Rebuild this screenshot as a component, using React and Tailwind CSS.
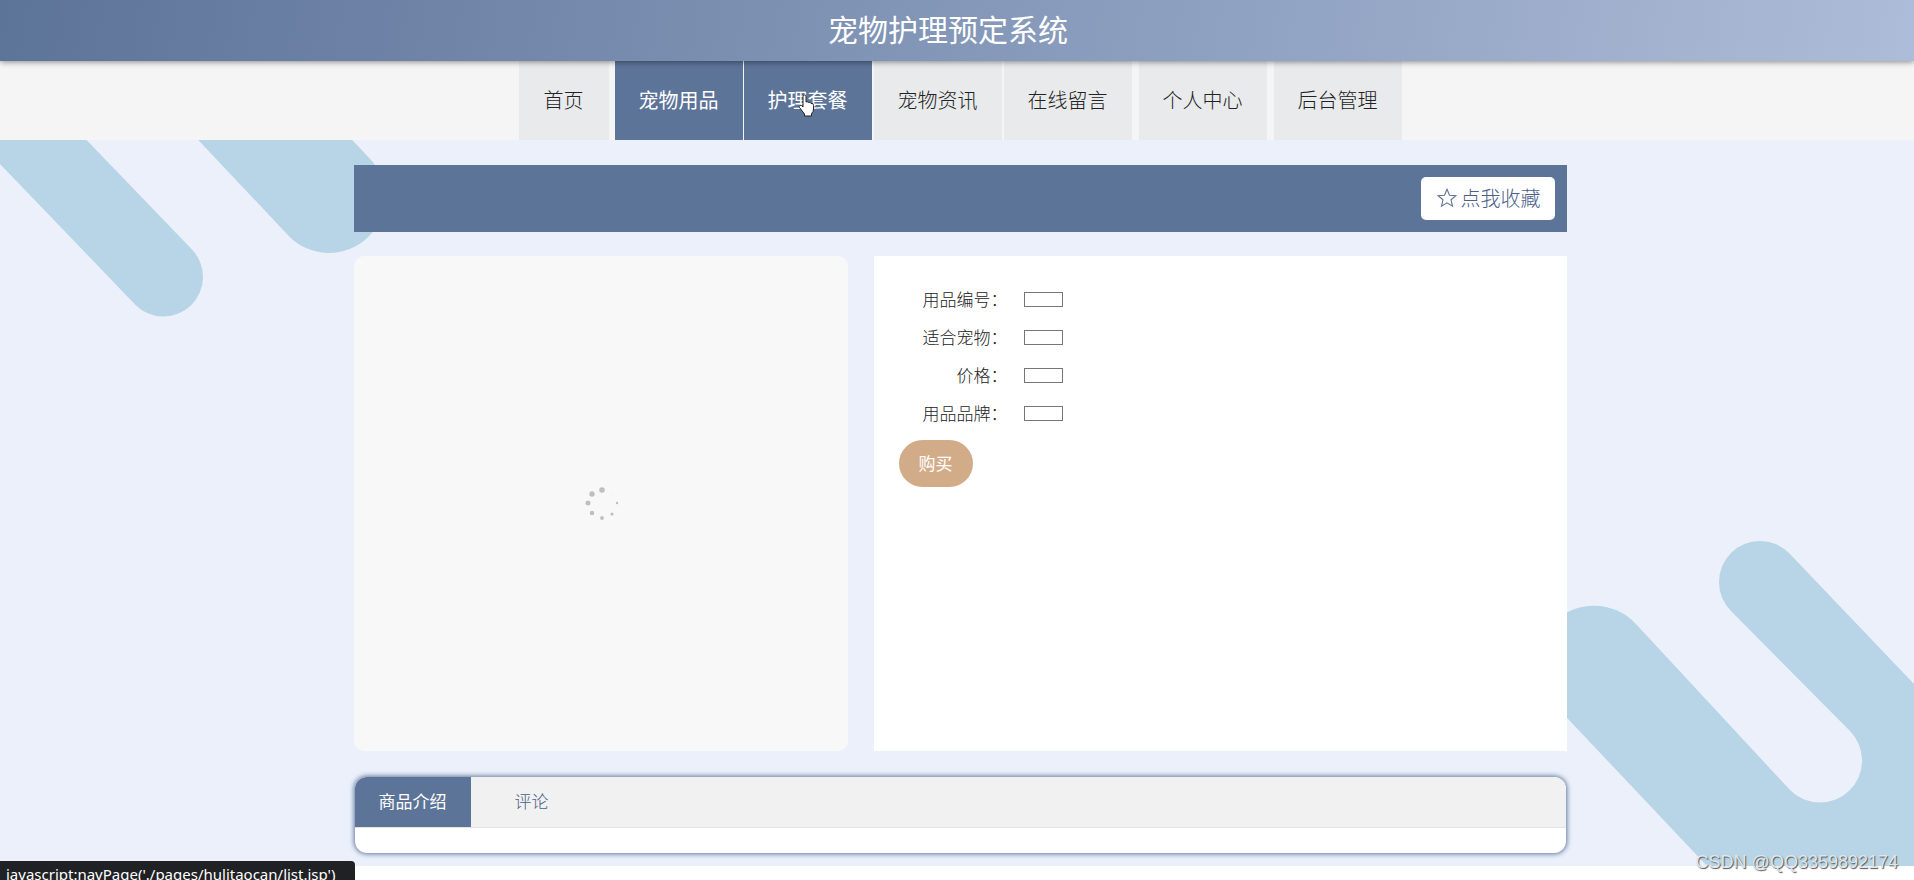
import React from 'react';

const navItems = [
    { label: '首页', className: 'px-[25px] mr-1.5 bg-[#e9eaeb] text-[#222]' },
    { label: '宠物用品', className: 'px-6 mr-px bg-[#5d7499] font-normal text-white' },
    { label: '护理套餐', className: 'px-6 mr-0.5 bg-[#5d7499] font-normal text-white', hovered: true },
    { label: '宠物资讯', className: 'px-6 mr-0.5 bg-[#e9eaeb] text-[#222]' },
    { label: '在线留言', className: 'px-6 mr-[7px] bg-[#e9eaeb] text-[#222]' },
    { label: '个人中心', className: 'px-6 mr-[7px] bg-[#e9eaeb] text-[#222]' },
    { label: '后台管理', className: 'px-6 bg-[#e9eaeb] text-[#222]' },
];

const fields = [
    { id: 'code', label: '用品编号' },
    { id: 'pet', label: '适合宠物' },
    { id: 'price', label: '价格' },
    { id: 'brand', label: '用品品牌' },
];

const HandPointer = () => (
    <svg viewBox="0 0 17 23" className="absolute left-[54px] top-[33px] w-[17px] h-[23px]" aria-hidden="true">
        <path
            d="M5 13V2.500Q5 1 6.500 1T8 2.500V8Q9 7 10.500 8.500Q12 7.500 13 9.500Q15.500 8.500 15.500 11.500V15Q15.500 18 13.500 19.500V22H6.500V20L1.500 13.500Q.5 12 2 11.300Q3.500 11 5 13Z"
            fill="#fff"
            stroke="#222"
            strokeWidth="1"
        />
    </svg>
);

const StarOutline = () => (
    <svg viewBox="0 0 20 20" className="w-5 h-5" fill="none" stroke="#5d7499" strokeWidth="1.1" aria-hidden="true">
        <path d="M10 1.200L12.500 7.200L18.800 7.700L14 11.800L15.500 18.200L10 14.800L4.500 18.200L6 11.800L1.200 7.700L7.500 7.200Z" />
    </svg>
);

const Backdrop = () => (
    <svg
        viewBox="0 140 1914 726"
        preserveAspectRatio="none"
        className="absolute inset-0 w-full h-full"
        aria-hidden="true"
    >
        <path d="M163.500 277L-36.500 69" stroke="#b7d5e6" strokeWidth="79" strokeLinecap="round" />
        <path d="M329 197L229 91" stroke="#b7d5e6" strokeWidth="112" strokeLinecap="round" />
        <path
            d="M1553 703A57 57 0 0 1 1635 623L1790 790A42 42 0 0 0 1850 731L1731 611A41 41 0 0 1 1789 553L1914 684V866H1707Z"
            fill="#b7d5e6"
        />
    </svg>
);

const Spinner = () => (
    <svg viewBox="0 0 36 36" className="w-9 h-9" fill="#bfbfbf" aria-label="loading">
        <circle cx="19" cy="4" r="2.800" />
        <circle cx="9" cy="8" r="2.700" />
        <circle cx="5" cy="17" r="2.500" />
        <circle cx="9" cy="27" r="2.200" />
        <circle cx="19" cy="32" r="1.900" />
        <circle cx="29" cy="28" r="1.600" />
        <circle cx="34" cy="17" r="1.200" />
        <circle cx="30" cy="8" r="0.800" fill="#ececec" />
    </svg>
);

const App = () => {
    return (
        <div className="relative min-h-screen bg-white overflow-hidden font-['Noto_Sans_CJK_SC',sans-serif] font-light text-[#222]">
            <header className="relative z-10 h-[61px] pr-[18px] pb-1.5 flex items-center justify-center bg-linear-100 from-[#5d7499] to-[#adbcd8] shadow-[0_1px_6px_rgba(0,0,0,0.45)]">
                <h1 className="text-[30px] leading-[54px] font-normal text-white">宠物护理预定系统</h1>
            </header>

            <nav className="h-[79px] pl-1.5 flex justify-center bg-[#f5f5f5]">
                {navItems.map((item) => (
                    <a
                        key={item.label}
                        href="#"
                        className={`relative flex items-center pb-0.5 text-[20px] ${item.className}`}
                    >
                        {item.label}
                        {item.hovered && <HandPointer />}
                    </a>
                ))}
            </nav>

            <main className="relative bg-[#ebf0fb] pt-[25px] pb-[13px]">
                <Backdrop />

                <div className="relative w-[1213px] max-w-full mx-auto left-[3px]">
                    {/* Title bar */}
                    <div className="h-[67px] px-3 flex items-center justify-end bg-[#5d7499]">
                        <button className="h-[43px] pl-4 pr-3.5 pb-0.5 flex items-center gap-1 rounded-[5px] bg-white text-[20px] text-[#4a6088]">
                            <StarOutline /> 点我收藏
                        </button>
                    </div>

                    {/* Picture and details */}
                    <div className="mt-6 flex gap-[26px]">
                        <div className="w-[494px] h-[495px] flex items-center justify-center rounded-[10px] bg-[#f8f8f8]">
                            <Spinner />
                        </div>
                        <div className="flex-1 px-[25px] pt-6 bg-white">
                            {fields.map((field) => (
                                <div key={field.id} className="h-[38px] flex items-center">
                                    <label htmlFor={field.id} className="w-[109px] text-right text-[17px]">
                                        {field.label}：
                                    </label>
                                    <input
                                        id={field.id}
                                        type="text"
                                        readOnly
                                        className="ml-4 w-[39px] h-[15px] border border-[#767676] bg-white"
                                    />
                                </div>
                            ))}
                            <button className="mt-2 pb-0.5 w-[74px] h-[47px] rounded-full bg-[#d2ac88] text-[17px] font-normal text-white">
                                购买
                            </button>
                        </div>
                    </div>

                    {/* Tabs */}
                    <section className="mt-[26px] mx-px h-[76px] overflow-hidden rounded-[12px] bg-white shadow-[0_0_5px_1px_#5d7499]">
                        <div className="h-[51px] flex border-b border-[#e2e2e2] bg-[#f1f1f1] text-[17px]" role="tablist">
                            <button role="tab" aria-selected="true" className="px-6 pb-0.5 bg-[#5d7499] font-normal text-white">
                                商品介绍
                            </button>
                            <button role="tab" aria-selected="false" className="ml-5 px-6 pb-0.5 text-[#4a5f85]">
                                评论
                            </button>
                        </div>
                    </section>
                </div>
            </main>

            <div className="absolute left-0 bottom-0 h-[19px] w-[355px] pl-1.5 overflow-hidden whitespace-nowrap rounded-tr-[4px] bg-[#202124] text-white font-['Noto_Sans',sans-serif] font-normal text-[15px] leading-[26px]">
                javascript:navPage('./pages/hulitaocan/list.jsp')
            </div>

            <div className="absolute right-4 bottom-1.5 whitespace-nowrap font-['Liberation_Sans',sans-serif] font-normal text-[18px] leading-6 text-[#dfe6ec] [text-shadow:1px_1px_1px_#555]">
                CSDN @QQ3359892174
            </div>
        </div>
    );
};

export default App;
